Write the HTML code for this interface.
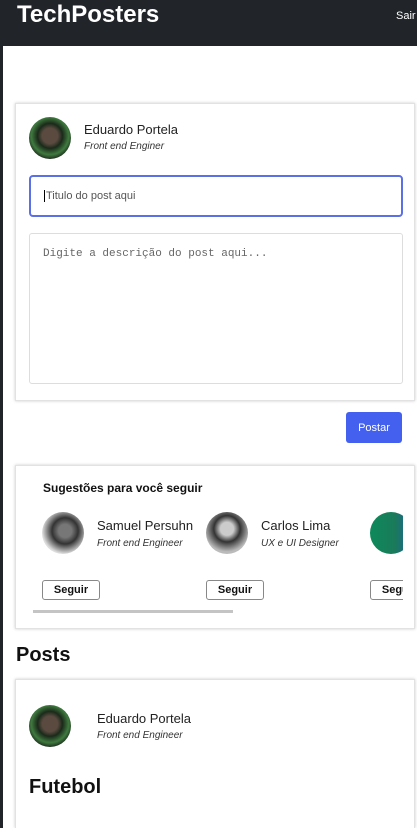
<!DOCTYPE html>
<html><head><meta charset="utf-8"><style>
*{box-sizing:border-box;margin:0;padding:0}
html,body{width:417px;height:828px;overflow:hidden}
body{background:#fff;font-family:"Liberation Sans",sans-serif;position:relative;color:#111}
.strip{position:absolute;left:0;top:0;width:3px;height:828px;background:#212429}
.hdr{position:absolute;left:0;top:0;width:417px;height:46px;background:#212429}
.logo{position:absolute;left:17px;top:1px;color:#fff;font-size:24px;font-weight:bold}
.sair{position:absolute;left:396px;top:10px;color:#fff;font-size:11px}
.card{position:absolute;left:15px;width:400px;background:#fff;border:1px solid #e2e2e2;box-shadow:0 0 3px rgba(0,0,0,.2)}
.av{position:absolute;width:42px;height:42px;border-radius:50%;overflow:hidden}
.name{position:absolute;font-size:13px;color:#222}
.role{position:absolute;font-size:10px;font-style:italic;color:#333}
.btn{position:absolute;height:20px;width:58px;border:1px solid #888;border-radius:3px;font-size:11px;font-weight:bold;text-align:center;line-height:18px;background:#fff}
</style></head><body>
<div class="hdr"><div class="logo">TechPosters</div><div class="sair">Sair</div></div>
<div class="strip"></div>

<div class="card" style="top:103px;height:298px">
 <div class="av" style="left:13px;top:13px;background:radial-gradient(circle at 50% 45%,#5a4a40 0 25%,#1a2a1a 40%,#3f7a3f 60%,#111 80%)"></div>
 <div class="name" style="left:68px;top:18px">Eduardo Portela</div>
 <div class="role" style="left:68px;top:37px">Front end Enginer</div>
 <div style="position:absolute;left:13px;top:71px;width:374px;height:42px;border:2px solid #5b70e6;border-radius:4px"></div>
 <div style="position:absolute;left:28px;top:86px;font-size:11px;color:#555;border-left:1px solid #000;padding-left:1px">Titulo do post aqui</div>
 <div style="position:absolute;left:13px;top:129px;width:374px;height:151px;border:1px solid #ddd;border-radius:3px"></div>
 <div style="position:absolute;left:27px;top:144px;font-size:11px;color:#666;font-family:'Liberation Mono',monospace">Digite a descrição do post aqui...</div>
</div>
<div style="position:absolute;left:346px;top:412px;width:56px;height:31px;background:#4361ee;border-radius:3px;color:#fff;font-size:11px;text-align:center;line-height:33px">Postar</div>

<div class="card" style="top:465px;height:164px;overflow:hidden">
 <div style="position:absolute;left:0;top:0;width:387px;height:162px;overflow:hidden">
 <div style="position:absolute;left:27px;top:15px;font-size:12px;font-weight:bold">Sugestões para você seguir</div>
 <div class="av" style="left:26px;top:46px;background:radial-gradient(circle at 55% 45%,#777 0 20%,#333 40%,#ddd 70%)"></div>
 <div class="name" style="left:81px;top:52px">Samuel Persuhn</div>
 <div class="role" style="left:81px;top:72px">Front end Engineer</div>
 <div class="av" style="left:190px;top:46px;background:radial-gradient(circle at 50% 40%,#ccc 0 20%,#333 40%,#bbb 70%)"></div>
 <div class="name" style="left:245px;top:52px">Carlos Lima</div>
 <div class="role" style="left:245px;top:72px">UX e UI Designer</div>
 <div class="av" style="left:354px;top:46px;background:linear-gradient(90deg,#0d8a5a,#1a7a5a 60%,#2060a0)"></div>
 <div class="btn" style="left:26px;top:114px">Seguir</div>
 <div class="btn" style="left:190px;top:114px">Seguir</div>
 <div class="btn" style="left:354px;top:114px">Seguir</div>
 <div style="position:absolute;left:17px;top:144px;width:200px;height:3px;background:#c4c4c4"></div>
 </div>
</div>

<div style="position:absolute;left:16px;top:644px;font-size:20px;font-weight:bold">Posts</div>

<div class="card" style="top:679px;height:149px;border-bottom:none">
 <div class="av" style="left:13px;top:25px;background:radial-gradient(circle at 50% 45%,#5a4a40 0 25%,#1a2a1a 40%,#3f7a3f 60%,#111 80%)"></div>
 <div class="name" style="left:81px;top:31px">Eduardo Portela</div>
 <div class="role" style="left:81px;top:50px">Front end Engineer</div>
 <div style="position:absolute;left:13px;top:96px;font-size:20px;font-weight:bold">Futebol</div>
</div>
</body></html>
